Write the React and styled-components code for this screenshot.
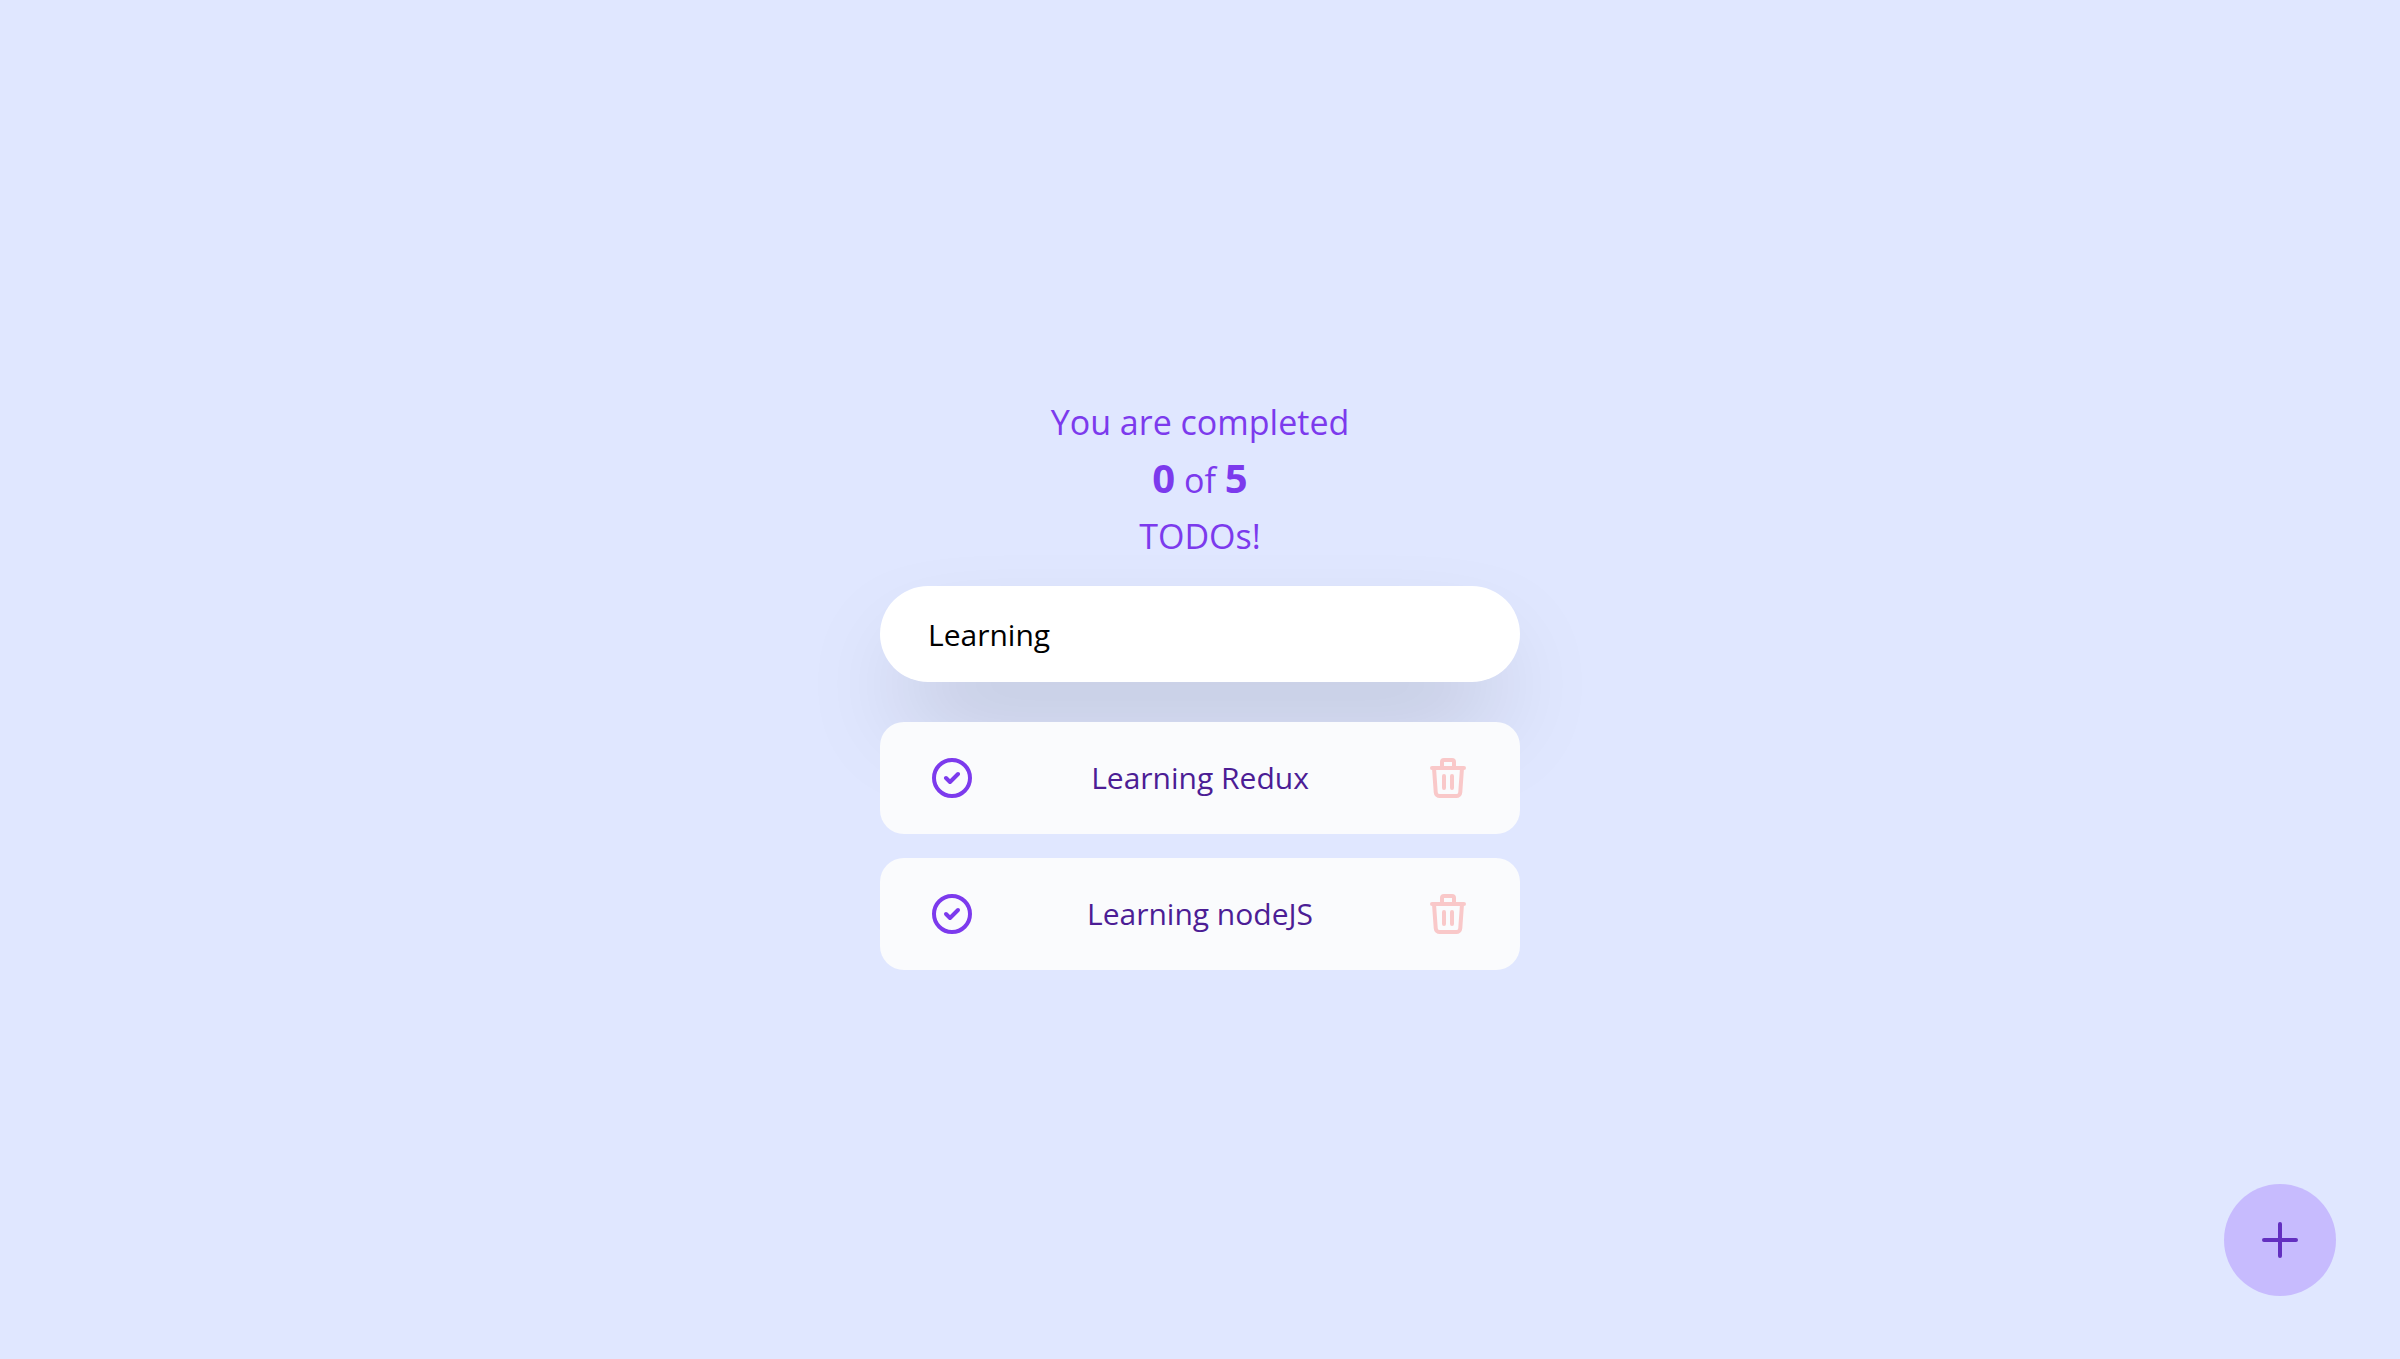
import React, { useState } from "react";
import styled, { createGlobalStyle } from "styled-components";

const GlobalStyle = createGlobalStyle`
  *, *::before, *::after {
    box-sizing: border-box;
  }

  body {
    margin: 0;
    background: #e0e7ff;
    font-family: "Segoe UI", "Open Sans", "Noto Sans", sans-serif;
    font-weight: 400;
  }

  button, input {
    font: inherit;
    color: inherit;
  }
`;

const Page = styled.main`
  min-height: 100vh;
  display: flex;
  flex-direction: column;
  align-items: center;
  justify-content: center;
`;

const Content = styled.div`
  width: 100%;
  max-width: 640px;
  display: flex;
  flex-direction: column;
`;

const Summary = styled.p`
  margin: 0 0 22px;
  padding-top: 5px;
  display: flex;
  flex-direction: column;
  align-items: center;
  color: #7c3aed;
  font-size: 34px;
  line-height: 56px;
`;

const Count = styled.strong`
  font-size: 40px;
  font-weight: 700;
`;

const SearchField = styled.input`
  width: 100%;
  height: 96px;
  margin-bottom: 40px;
  padding: 0 48px;
  border: 0;
  border-radius: 48px;
  outline: none;
  background: #ffffff;
  color: #000000;
  font-size: 30px;
  box-shadow: 0 50px 100px -24px rgba(0, 0, 0, 0.25);
`;

const TodoList = styled.ul`
  margin: 0;
  padding: 0;
  list-style: none;
  display: flex;
  flex-direction: column;
  gap: 24px;
`;

const TodoCard = styled.li`
  position: relative;
  height: 112px;
  padding: 0 48px;
  display: flex;
  align-items: center;
  justify-content: space-between;
  border-radius: 24px;
  background: #fafbfd;
`;

const TodoTitle = styled.span`
  color: #4c1d95;
  font-size: 30px;
  line-height: 48px;
`;

const IconButton = styled.button`
  display: flex;
  padding: 0;
  border: 0;
  background: none;
  color: ${({ $color }) => $color};
  cursor: pointer;
`;

const AddButton = styled.button`
  position: fixed;
  right: 64px;
  bottom: 63px;
  width: 112px;
  height: 112px;
  padding: 0;
  display: flex;
  align-items: center;
  justify-content: center;
  border: 0;
  border-radius: 50%;
  background: #c7bbfe;
  color: #632fc0;
  cursor: pointer;
`;

const Icon = ({ d }) => (
  <svg
    width="48"
    height="48"
    viewBox="0 0 24 24"
    fill="none"
    stroke="currentColor"
    strokeWidth="2"
    strokeLinecap="round"
    strokeLinejoin="round"
    aria-hidden="true"
  >
    <path d={d} />
  </svg>
);

const icons = {
  check: "M9 12l2 2 4-4m6 2a9 9 0 11-18 0 9 9 0 0118 0z",
  trash:
    "M19 7l-.867 12.142A2 2 0 0116.138 21H7.862a2 2 0 01-1.995-1.858L5 7m5 4v6m4-6v6m1-10V4a1 1 0 00-1-1h-4a1 1 0 00-1 1v3M4 7h16",
  plus: "M12 4v16m8-8H4",
};

const todos = ["Learning Redux", "Learning nodeJS"];

export default function App() {
  const [query, setQuery] = useState("Learning");
  const completed = 0;
  const total = 5;
  const visible = todos.filter((title) =>
    title.toLowerCase().includes(query.toLowerCase())
  );

  return (
    <>
      <GlobalStyle />
      <Page>
        <Content>
          <Summary>
            <span>You are completed</span>
            <span>
              <Count>{completed}</Count> of <Count>{total}</Count>
            </span>
            <span>TODOs!</span>
          </Summary>
          <SearchField
            type="text"
            aria-label="Search todos"
            value={query}
            onChange={(event) => setQuery(event.target.value)}
          />
          <TodoList>
            {visible.map((title) => (
              <TodoCard key={title}>
                <IconButton type="button" $color="#7c3aed" aria-label="Complete">
                  <Icon d={icons.check} />
                </IconButton>
                <TodoTitle>{title}</TodoTitle>
                <IconButton type="button" $color="#f9c8c9" aria-label="Delete">
                  <Icon d={icons.trash} />
                </IconButton>
              </TodoCard>
            ))}
          </TodoList>
        </Content>
        <AddButton type="button" aria-label="Add todo">
          <Icon d={icons.plus} />
        </AddButton>
      </Page>
    </>
  );
}
